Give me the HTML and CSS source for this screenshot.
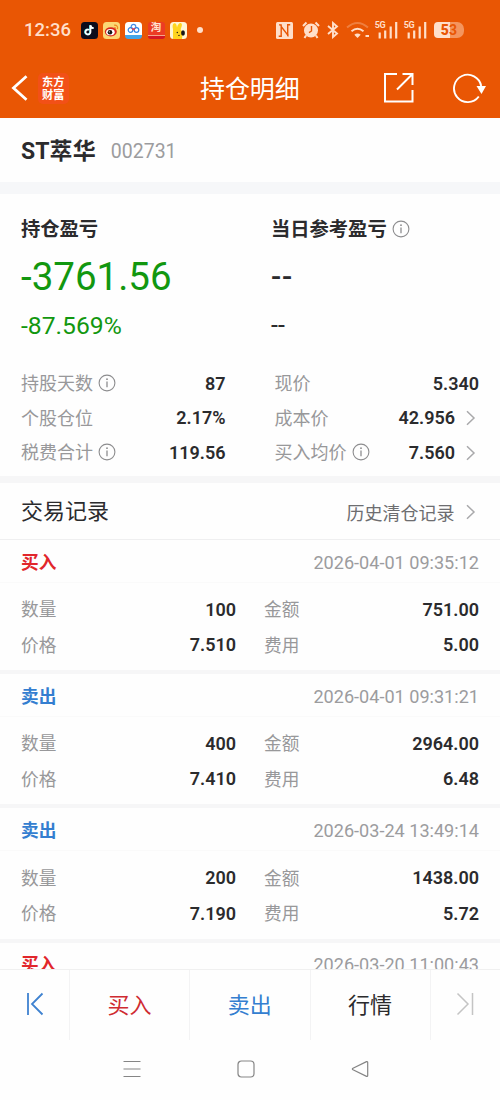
FILE: index.html
```html
<!DOCTYPE html>
<html lang="zh-CN">
<head>
<meta charset="utf-8">
<title>持仓明细</title>
<link rel="stylesheet" href="styles.css">
</head>
<body>
<svg class="defs" width="0" height="0" aria-hidden="true">
  <symbol id="info" viewBox="0 0 18 18"><circle cx="9" cy="9" r="7.9" fill="none" stroke="currentColor" stroke-width="1.1"/><path d="M9 7.600V13.200" stroke="currentColor" stroke-width="1.300"/><circle cx="9" cy="5.200" r=".9" fill="currentColor"/></symbol>
  <symbol id="chev" viewBox="0 0 10 16"><path d="M1 1.200 8 8 1 14.800" fill="none" stroke="currentColor" stroke-width="1.500"/></symbol>
  <symbol id="bars" viewBox="0 0 24 20"><path d="M5.700 18.500v-6M11.200 18.500v-8M16.700 18.500v-12M22.200 18.500v-16.500" stroke="currentColor" stroke-width="2.200"/></symbol>
</svg>
<div class="phone">
  <header class="top">
    <div class="status">
      <span class="clock">12:36</span>
      <div class="apps">
        <svg width="17" height="17" viewBox="0 0 17 17"><rect width="17" height="17" rx="3.500" fill="#0b0b1b"/><path d="M8.200 7.800a2.500 2.500 0 1 0 1.300 2.400V3.200c.2 1.700 1.300 2.900 3.200 3" transform="translate(-.6 0)" fill="none" stroke="#41d8dc" stroke-width="1.700"/><path d="M8.200 7.800a2.500 2.500 0 1 0 1.300 2.400V3.200c.2 1.700 1.300 2.900 3.200 3" fill="none" stroke="#fff" stroke-width="1.700"/></svg>
        <svg width="17" height="17" viewBox="0 0 17 17"><rect width="17" height="17" rx="3.500" fill="#fbd774"/><ellipse cx="7.800" cy="9.800" rx="6" ry="4.600" fill="#d8251d"/><ellipse cx="7.400" cy="10.200" rx="4.300" ry="3.100" fill="#fff"/><circle cx="7" cy="10.300" r="2.300" fill="#141414"/><circle cx="6.300" cy="9.800" r=".6" fill="#fff"/><path d="M11 3.200c2.800-.4 4.200 1.600 3.500 4M11.200 5.500c1.200-.1 1.700.7 1.400 1.600" fill="none" stroke="#f08a1d" stroke-width="1.100"/></svg>
        <svg width="17" height="17" viewBox="0 0 17 17"><path d="M3.500 0h10A3.500 3.500 0 0 1 17 3.500V13H0V3.500A3.500 3.500 0 0 1 3.500 0" fill="#fff"/><path d="M0 13h17v.5a3.500 3.500 0 0 1-3.500 3.500h-10A3.500 3.500 0 0 1 0 13.500" fill="#43a5e8"/><circle cx="5.500" cy="8" r="2.300" fill="none" stroke="#2c82e4" stroke-width="1.200"/><circle cx="11.500" cy="8" r="2.300" fill="none" stroke="#2c82e4" stroke-width="1.200"/><circle cx="8.500" cy="4.600" r="2.300" fill="none" stroke="#498be3" stroke-width="1.200"/><path d="m7 6.200 1.500 1.500L10 6.200" fill="none" stroke="#e83e4d" stroke-width="1.300"/></svg>
        <span class="tao"><b>淘</b><i></i></span>
        <svg width="17" height="17" viewBox="0 0 17 17"><rect width="17" height="17" rx="3.500" fill="#fff6d4"/><path d="M3 17V7C2 3 3.300.8 5 1.300c1.300.4 1.800 2.500 2 4.200C7.800 2 10 .2 11.400 1.400 12.800 2.600 11 6 10.600 7.400c2 1.600 2 5.600 1.400 9.600z" fill="#ffd51f"/><circle cx="7.300" cy="10.500" r=".75" fill="#332711"/><path d="M8 13.300q1.200.7 2-.2" fill="none" stroke="#332711" stroke-width=".8"/><ellipse cx="13" cy="11" rx="1.900" ry="2.700" fill="#171717"/></svg>
      </div>
      <span class="dot"></span>
      <div class="sys">
        <svg class="nfc" width="17" height="17" viewBox="0 0 17 17"><rect width="17" height="17" rx="1.500" fill="currentColor"/><path d="M2.700 14.200H5.200V4.500L11.700 13V2.800h2.500" fill="none" stroke="#e95604" stroke-width="1.400"/><path d="M5.200 4V2.800H3M11.700 12v2.200" fill="none" stroke="#e95604" stroke-width="1.200"/></svg>
        <svg class="alarm" width="18" height="18" viewBox="0 0 18 18"><circle cx="9" cy="9.500" r="7" fill="currentColor"/><path d="M1 5 4.500 1.500M17 5l-3.500-3.500M4 14.500l-1.500 2.500M14 14.500l1.500 2.500" stroke="currentColor" stroke-width="2"/><path d="M9.500 5v5L7 11.700" fill="none" stroke="#e95604" stroke-width="1.400"/></svg>
        <svg class="bt" width="12" height="18" viewBox="0 0 12 18"><path d="m1 5 9 7.500L6 16V2l4 3.500L1 13" fill="none" stroke="currentColor" stroke-width="1.900"/></svg>
        <svg class="wifi" width="24" height="18" viewBox="0 0 24 18"><path d="M1 6.500q10.500-9 21 0" fill="none" stroke="currentColor" stroke-width="2" opacity=".3"/><path d="M5.500 10.200q6-5 12 0" fill="none" stroke="currentColor" stroke-width="2"/><path d="M8.300 13.800q3.200-2.600 6.400 0L11.500 17z" fill="currentColor"/><rect x="19.500" y="14" width="3.500" height="2" fill="currentColor"/></svg>
        <span class="sig"><em>5G</em><svg width="24" height="20"><use href="#bars"/></svg></span>
        <span class="sig"><em>5G</em><svg width="24" height="20"><use href="#bars"/></svg></span>
        <span class="batt"><span class="cell"><b>5</b><i>3</i></span></span>
      </div>
    </div>
    <div class="bar">
      <svg class="back" width="18" height="28" viewBox="0 0 18 28"><path d="M15.500 2.200 2.500 14l13 11.800" fill="none" stroke="#fff" stroke-width="2.800"/></svg>
      <span class="brand"><span>东方</span><span>财富</span></span>
      <h1>持仓明细</h1>
      <svg class="share" width="32" height="32" viewBox="0 0 32 32" fill="none" stroke="#fff" stroke-width="2"><path d="M14 2H2v27.500h27.500V18M14 17.500 29 2.500M19.500 2h10v11"/></svg>
      <svg class="reload" width="34" height="32" viewBox="0 0 34 32"><path d="M26.800 24.500A13.700 13.700 0 1 1 29.200 14" fill="none" stroke="#fff" stroke-width="1.900"/><path d="M24.500 14h9.500l-4.500 8z" fill="#fff"/></svg>
    </div>
  </header>

  <main>
    <section class="stock"><strong>ST萃华</strong><span>002731</span></section>
    <section class="pnl">
      <div class="col">
        <h2>持仓盈亏</h2>
        <p class="big down">-3761.56</p>
        <p class="mid down">-87.569%</p>
      </div>
      <div class="col">
        <h2>当日参考盈亏<svg class="info" width="18" height="18"><use href="#info"/></svg></h2>
        <p class="dash-l">--</p>
        <p class="dash-s">--</p>
      </div>
    </section>
    <section class="stats">
      <dl>
        <div><dt>持股天数<svg class="info" width="18" height="18"><use href="#info"/></svg></dt><dd>87</dd></div>
        <div><dt>个股仓位</dt><dd>2.17%</dd></div>
        <div><dt>税费合计<svg class="info" width="18" height="18"><use href="#info"/></svg></dt><dd>119.56</dd></div>
      </dl>
      <dl>
        <div><dt>现价</dt><dd>5.340</dd></div>
        <div><dt>成本价</dt><dd>42.956<svg class="chev" width="10" height="16"><use href="#chev"/></svg></dd></div>
        <div><dt>买入均价<svg class="info" width="18" height="18"><use href="#info"/></svg></dt><dd>7.560<svg class="chev" width="10" height="16"><use href="#chev"/></svg></dd></div>
      </dl>
    </section>
    <section class="rec-head"><h3>交易记录</h3><span>历史清仓记录<svg class="chev" width="10" height="16"><use href="#chev"/></svg></span></section>

    <article class="rec">
      <header><b class="buy">买入</b><time>2026-04-01 09:35:12</time></header>
      <div class="grid"><span>数量</span><b>100</b><span>金额</span><b>751.00</b><span>价格</span><b>7.510</b><span>费用</span><b>5.00</b></div>
    </article>
    <article class="rec">
      <header><b class="sell">卖出</b><time>2026-04-01 09:31:21</time></header>
      <div class="grid"><span>数量</span><b>400</b><span>金额</span><b>2964.00</b><span>价格</span><b>7.410</b><span>费用</span><b>6.48</b></div>
    </article>
    <article class="rec">
      <header><b class="sell">卖出</b><time>2026-03-24 13:49:14</time></header>
      <div class="grid"><span>数量</span><b>200</b><span>金额</span><b>1438.00</b><span>价格</span><b>7.190</b><span>费用</span><b>5.72</b></div>
    </article>
    <article class="rec">
      <header><b class="buy">买入</b><time>2026-03-20 11:00:43</time></header>
    </article>
  </main>

  <nav class="actions">
    <span><svg width="18" height="24" viewBox="0 0 18 24" fill="none" stroke="#3f82d0" stroke-width="1.800"><path d="M2 1v22M16.500 1.500 6 12l10.500 10.500"/></svg></span>
    <span class="buy">买入</span>
    <span class="sell">卖出</span>
    <span>行情</span>
    <span><svg width="18" height="24" viewBox="0 0 18 24" fill="none" stroke="#c4c4c4" stroke-width="1.500"><path d="M16.500 1v22M1.500 1.500 12 12 1.500 22.500"/></svg></span>
  </nav>
  <footer class="keys">
    <svg width="18" height="18" viewBox="0 0 18 18"><path d="M.5 1.500h17M.5 9h17M.5 16.500h17"/></svg>
    <svg width="18" height="18" viewBox="0 0 18 18"><rect x="1" y="1" width="16" height="16" rx="3.500"/></svg>
    <svg width="18" height="18" viewBox="0 0 18 18"><path d="M15.500 1.600 2 8.200q-1.300.8 0 1.600l13.500 6.600q1.200.3 1.200-1V2.600q0-1.300-1.200-1z"/></svg>
  </footer>
</div>
</body>
</html>
```

FILE: styles.css
```css
* { box-sizing: border-box; margin: 0; padding: 0; }
body { background: #fff; font-family: Roboto, "Noto Sans CJK SC", sans-serif; color: #2b2b2d; }
i, em { font-style: normal; }
svg { display: block; flex: none; }
.defs { position: absolute; }
.phone { width: 500px; height: 1100px; display: flex; flex-direction: column; overflow: hidden; background: #fefefe; }

.top { height: 118px; flex: none; background: #e95604; color: #fff; }
.status { height: 60px; padding-left: 24px; display: flex; align-items: center; color: #ffdfca; }
.clock { width: 57px; font-size: 18.500px; font-weight: 500; line-height: 22px; }
.apps { display: flex; gap: 5.200px; }
.tao { width: 17px; height: 17px; border-radius: 3px; background: #ec3c24; display: flex; flex-direction: column; justify-content: space-between; }
.tao b { font-size: 10.500px; line-height: 12px; font-weight: 700; color: #ffe4cf; text-align: center; }
.tao i { height: 4px; background: #d51824; border-top: 1px solid #f4a688; border-radius: 0 0 3px 3px; }
.dot { width: 6px; height: 6px; border-radius: 50%; background: #ffdfca; margin-left: 10px; }
.sys { display: flex; align-items: center; margin-left: 73px; }
.alarm { margin-left: 9px; }
.bt { margin-left: 7px; }
.wifi { margin-left: 7px; }
.sig { width: 24px; height: 20px; margin-left: 4px; position: relative; }
.sig + .sig { margin-left: 5px; }
.sig em { position: absolute; left: 1px; top: 1px; font-size: 9px; line-height: 8px; font-weight: 700; letter-spacing: -.3px; z-index: 1; }
.batt { margin-left: 7px; }
.cell { display: flex; width: 30px; height: 16px; border-radius: 4px 7px 7px 4px; background: linear-gradient(90deg, #ffdfca 16px, #f4955e 16px); font-size: 14px; line-height: 17px; font-weight: 700; padding-left: 7px; }
.cell b { color: #e95604; }
.cell i { color: #e95604; }
.bar { height: 58px; padding-left: 11px; display: flex; align-items: center; }
.back { margin-top: -3px; }
.brand { display: flex; flex-direction: column; width: 31px; height: 31px; margin: -2px 0 0 9px; padding: 2px 0 0 4px; border-radius: 5px; background: #f25017; font-family: "Noto Sans CJK SC", sans-serif; font-weight: 700; font-size: 11.200px; }
.brand span { line-height: 13.500px; height: 13.500px; }
h1 { margin: 2px 0 0 130px; width: 184px; font-size: 25px; font-weight: 400; line-height: 30px; letter-spacing: -.1px; padding-left: 1px; }
.share { margin-top: -3px; }
.reload { margin: -3px 0 0 37px; }

main { height: 851px; flex: none; overflow: hidden; }
.stock { height: 76px; padding: 3px 21px 0; display: flex; align-items: center; border-bottom: 12px solid #f6f7f9; }
.stock strong { font-size: 23px; font-weight: 700; line-height: 30px; letter-spacing: .1px; }
.stock span { margin-left: 15px; font-size: 19.500px; color: #9c9c9e; }
.pnl { height: 170px; display: flex; padding: 23px 0 0 21px; }
.pnl .col { width: 250px; flex: none; }
h2 { font-size: 19.300px; line-height: 26px; font-weight: 700; display: flex; align-items: center; }
.info { color: #8d8d8f; margin: -2px 0 0 5px; }
.down { color: #12970f; }
.big { font-size: 38.500px; line-height: 46px; margin-top: 11px; }
.mid { font-size: 24.700px; line-height: 30px; margin-top: 11px; }
.dash-l { font-size: 30px; font-weight: 500; line-height: 46px; margin-top: 11px; letter-spacing: .8px; }
.dash-s { font-size: 25px; line-height: 30px; margin-top: 11px; }
.stats { height: 119px; padding: 3px 21px 0; display: grid; grid-template-columns: 204.500px 204.500px; column-gap: 49px; border-bottom: 7px solid #f6f6f7; }
.stats dl > div { height: 34.600px; display: flex; align-items: center; justify-content: space-between; }
dt { display: flex; align-items: center; font-size: 18px; line-height: 26px; color: #98989a; }
dd { display: flex; align-items: center; font-size: 18px; line-height: 26px; font-weight: 600; margin-top: -1px; }
.chev { color: #a9a9ab; margin: 0 3px 0 11px; }
.rec-head { height: 57px; padding: 2px 21px 0; display: flex; align-items: center; justify-content: space-between; border-bottom: 1px solid #efeff0; }
h3 { font-size: 22px; line-height: 30px; font-weight: 400; }
.rec-head span { display: flex; align-items: center; font-size: 18px; color: #6d6d70; margin-right: .5px; }

.rec { height: 134.200px; border-bottom: 4px solid #f6f6f7; }
.rec header { height: 43px; padding: 3px 21px 0; display: flex; align-items: center; justify-content: space-between; border-bottom: 1px solid #fafafa; }
.rec header b { font-size: 17.700px; line-height: 26px; font-weight: 700; }
.rec time { font-size: 18.100px; line-height: 22px; color: #9c9c9e; }
.grid { padding: 9px 21px 0; display: grid; grid-template-columns: 60px 155px 88px 155px; grid-auto-rows: 35.500px; align-items: center; font-size: 18px; }
.grid span { color: #98989a; font-size: 17.700px; line-height: 26px; padding-top: 1px; }
.grid b { font-weight: 600; text-align: right; line-height: 22px; }
.grid span:nth-child(4n+3) { padding-left: 28px; }
.buy { color: #e1262b; }
.sell { color: #347ed0; }

.actions { height: 71px; flex: none; border-top: 1px solid #f0f0f0; display: grid; grid-template-columns: 70px 120px 120.500px 120px 1fr; font-size: 22px; }
.actions span { display: flex; align-items: center; justify-content: center; border-right: 1px solid #f3f3f4; line-height: 30px; padding-top: 2px; }
.actions span:last-child { border-right: 0; }
.actions svg { margin-top: -5px; }
.actions .buy { color: #cf2b31; }
.keys { height: 60px; display: flex; gap: 96px; padding: 20px 0 0 123px; }
.keys svg { fill: none; stroke: #858585; stroke-width: 1.200; }
```
